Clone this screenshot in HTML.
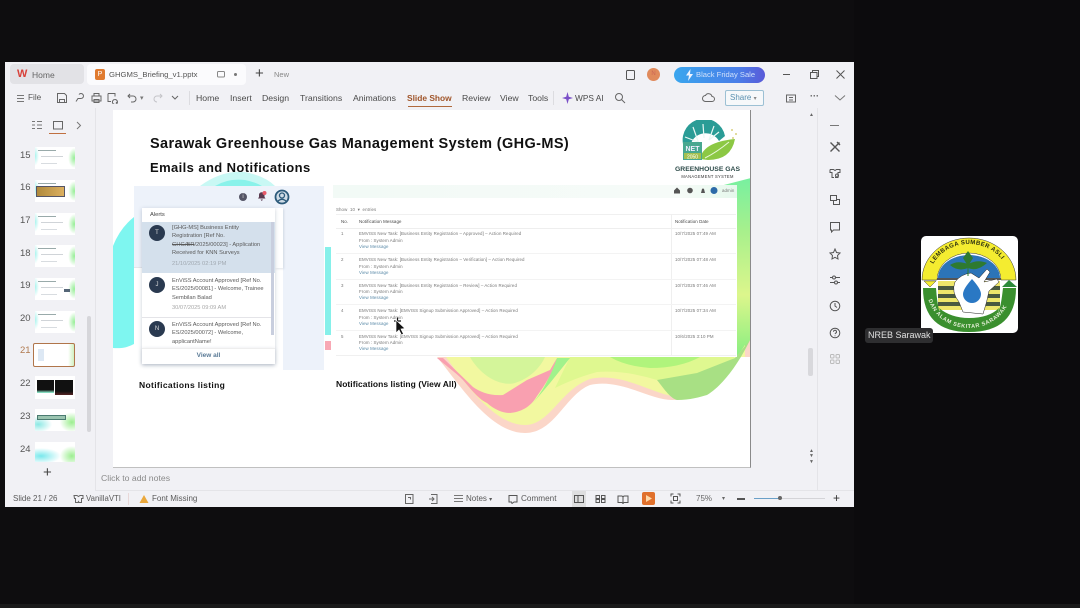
<!DOCTYPE html>
<html><head><meta charset="utf-8"><style>
html,body{margin:0;padding:0;width:1080px;height:608px;overflow:hidden;background:#0e0d0f}
*{box-sizing:border-box}
body{font-family:"Liberation Sans",sans-serif;position:relative}
.a{position:absolute;white-space:nowrap}
.t{position:absolute;white-space:nowrap;color:#444;font-size:9px;line-height:12px}
.m{position:absolute;white-space:nowrap;top:92px;font-size:8.700px;line-height:12px;color:#4a4a4a}
.n{position:absolute;left:20px;font-size:9.500px;color:#555;line-height:12px}
.th{position:absolute;left:35px;width:40px;height:22px;background:linear-gradient(#9aa,#9aa) 3px 3px/18px 1px no-repeat,linear-gradient(#d0d4d8,#d0d4d8) 6px 9px/22px 1px no-repeat,linear-gradient(#d8dce0,#d8dce0) 6px 16px/16px 1px no-repeat,radial-gradient(ellipse 6px 10px at 98% 50%,#98ee98,rgba(255,255,255,0)),radial-gradient(ellipse 4px 10px at 0 40%,#a8f4ee,rgba(255,255,255,0)),#fff}
.s6{color:#777;font-size:4.400px;letter-spacing:.02em;position:absolute;white-space:nowrap;filter:blur(.3px)}
.al{position:absolute;left:172px;font-size:5.700px;line-height:8.400px;color:#5a5a5a;white-space:nowrap;filter:blur(.2px)}
.av{position:absolute;left:149px;width:16px;height:16px;border-radius:50%;background:#2a3a50;color:#ddd;font-size:6px;line-height:16px;text-align:center}
svg.i{position:absolute;fill:none;stroke:#555;stroke-width:1}
</style></head><body>
<div class="a" style="left:854px;top:0;width:226px;height:608px;background:#0c0b0d"></div>
<div class="a" style="left:0;top:604px;width:1080px;height:4px;background:#1a1a1a"></div>
<!-- window -->
<div class="a" style="left:5px;top:62px;width:849px;height:445px;background:#f1f1f5"></div>
<!-- tabs -->
<div class="a" style="left:10px;top:64px;width:74px;height:20px;background:#e2e2e6;border-radius:4px"></div>
<div class="a" style="left:17px;top:68px;color:#d8413a;font-weight:bold;font-size:11px;line-height:12px">W</div>
<div class="t" style="left:32px;top:69px;font-size:8.500px;color:#666">Home</div>
<div class="a" style="left:87px;top:64px;width:159px;height:21px;background:#fbfbfd;border-radius:4px"></div>
<div class="a" style="left:95px;top:69px;width:10px;height:11px;background:#e07b30;border-radius:2px;color:#fff;font-size:7px;line-height:11px;text-align:center">P</div>
<div class="t" style="left:109px;top:69px;font-size:7.700px;color:#555">GHGMS_Briefing_v1.pptx</div>
<svg class="i" style="left:216px;top:70px" width="10" height="10"><rect x="1.500" y="1.500" width="7" height="5.500" rx="1" stroke="#888"/></svg>
<div class="a" style="left:234px;top:73px;width:3px;height:3px;background:#777;border-radius:50%"></div>
<div class="a" style="left:255px;top:66px;font-size:15px;line-height:16px;color:#444">+</div>
<div class="t" style="left:274px;top:69px;font-size:7.500px;color:#888">New</div>
<svg class="i" style="left:625px;top:69px" width="12" height="12"><rect x="1.500" y="1.500" width="8" height="9" rx="1" stroke="#555"/></svg>
<div class="a" style="left:647px;top:68px;width:13px;height:13px;border-radius:50%;background:#e08a5c;color:#c65;font-size:6px;line-height:13px;text-align:center">N</div>
<div class="a" style="left:674px;top:67px;width:91px;height:16px;border-radius:8px;background:linear-gradient(90deg,#3aa6ee,#4a7ee8 70%,#5a5ad8)"></div>
<svg class="i" style="left:685px;top:69px;stroke:none" width="9" height="12"><path d="M5.500 0L1 6.500h3L3 12l5-7H5z" fill="#eef4ff"/></svg>
<div class="t" style="left:696px;top:69px;font-size:7.600px;color:#cfe0fb">Black Friday Sale</div>
<div class="a" style="left:783px;top:74px;width:7px;height:1px;background:#555"></div>
<svg class="i" style="left:809px;top:69px" width="11" height="11"><path d="M1.500 3.500h6.500v6h-6.500zM3.500 3.500v-2h6v6h-2" stroke="#555"/></svg>
<svg class="i" style="left:835px;top:69px" width="11" height="11"><path d="M1.500 1.500l8 8M9.500 1.500l-8 8" stroke="#555"/></svg>
<!-- toolbar -->
<svg class="i" style="left:17px;top:94px" width="8" height="9"><path d="M0 1.500h7M0 4.500h7M0 7.500h7" stroke="#777"/></svg>
<div class="t" style="left:28px;top:92px;font-size:8.200px;color:#555">File</div>
<svg class="i" style="left:56px;top:92px" width="84" height="12"><path d="M1.500 1.500h7l2 2v7h-9zM3.500 10.500v-3h5v3" stroke="#666"/><path d="M23 2.500a2.500 2.500 0 1 1 2 4h-3l-2 3" stroke="#666"/><path d="M36 4h9v5h-9zM38 4v-2.500h5v2.500M38 7.500h5v3h-5z" stroke="#666"/><path d="M52 1.500h7v3M52 1.500v8h3M59 7.500a2.500 2.500 0 1 1-.1 0M61 11l-1-1" stroke="#666"/><path d="M74 2l-2 2 2 2M72 4h5a3 3 0 0 1 0 6h-2" stroke="#666"/></svg>
<div class="t" style="left:140px;top:93px;font-size:7px;color:#777">▾</div>
<svg class="i" style="left:152px;top:92px" width="30" height="12"><path d="M8 2l2 2-2 2M10 4h-5a3 3 0 0 0 0 6" stroke="#c4c4c8"/><path d="M20 4l3 3 3-3" stroke="#666"/></svg>
<div class="a" style="left:189px;top:91px;width:1px;height:14px;background:#dcdce0"></div>
<div class="m" style="left:196px">Home</div>
<div class="m" style="left:230px">Insert</div>
<div class="m" style="left:262px">Design</div>
<div class="m" style="left:300px">Transitions</div>
<div class="m" style="left:353px">Animations</div>
<div class="m" style="left:407px;color:#a0552a;font-weight:bold;font-size:8.400px">Slide Show</div>
<div class="a" style="left:408px;top:106px;width:44px;height:1px;background:#b0693c"></div>
<div class="m" style="left:462px">Review</div>
<div class="m" style="left:500px">View</div>
<div class="m" style="left:528px">Tools</div>
<div class="a" style="left:553px;top:91px;width:1px;height:14px;background:#dcdce0"></div>
<svg class="i" style="left:562px;top:92px;stroke:none" width="11" height="12"><path d="M5.500 0l1.300 4.700 4.200 1.300-4.200 1.300-1.300 4.700-1.300-4.700-4.200-1.300 4.200-1.300z" fill="#7a4fc8"/></svg>
<div class="m" style="left:575px;font-size:8.300px">WPS AI</div>
<svg class="i" style="left:614px;top:92px" width="12" height="12"><circle cx="5" cy="5" r="3.500" stroke="#666"/><path d="M7.500 7.500l3.500 3.500" stroke="#666"/></svg>
<svg class="i" style="left:702px;top:92px" width="13" height="12"><path d="M3.500 9.500a3 3 0 0 1 0-6 3.500 3.500 0 0 1 6.500 1 2.500 2.500 0 0 1 0 5z" stroke="#666"/></svg>
<div class="a" style="left:725px;top:90px;width:39px;height:16px;border:1px solid #9cc0d4;border-radius:2px;background:#f6f8fa;color:#5a90b0;font-size:8px;line-height:14px;padding-left:4px">Share <span style="font-size:6px;color:#888">▾</span></div>
<svg class="i" style="left:785px;top:92px" width="12" height="12"><path d="M1.500 3h9v7h-9zM4 5.500h4M4 8h4" stroke="#666"/></svg>
<div class="t" style="left:810px;top:90px;font-size:9px;color:#555;font-weight:bold">···</div>
<svg class="i" style="left:834px;top:94px" width="12" height="8"><path d="M1 1.500l5 4.500 5-4.500" stroke="#777"/></svg>
<!-- left panel -->
<div class="a" style="left:95px;top:108px;width:1px;height:382px;background:#e4e4e8"></div>
<svg class="i" style="left:31px;top:120px" width="60" height="12"><path d="M1 1.500h3M1 5h3M1 8.500h3M6 1.500h5M6 5h5M6 8.500h5" stroke="#777"/><rect x="22.500" y="1.500" width="9" height="7.500" stroke="#666"/><path d="M46 2l3.500 3.500-3.500 3.500" stroke="#777"/></svg>
<div class="a" style="left:49px;top:133px;width:17px;height:1px;background:#c07040"></div>
<div class="a" style="left:87px;top:316px;width:4px;height:116px;background:#d6d6da;border-radius:2px"></div>
<div class="n" style="top:150px">15</div><div class="th" style="top:147px"></div>
<div class="n" style="top:182px">16</div><div class="th" style="top:180px"></div><div class="a" style="left:36px;top:186px;width:29px;height:11px;background:linear-gradient(90deg,#b08a3c,#dcb060);border:1px solid #556"></div>
<div class="n" style="top:215px">17</div><div class="th" style="top:213px"></div>
<div class="n" style="top:248px">18</div><div class="th" style="top:245px"></div>
<div class="n" style="top:280px">19</div><div class="th" style="top:278px"></div><div class="a" style="left:64px;top:289px;width:6px;height:3px;background:#567"></div>
<div class="n" style="top:313px">20</div><div class="th" style="top:311px"></div>
<div class="n" style="top:345px;color:#b07a50">21</div><div class="a" style="left:33px;top:343px;width:42px;height:24px;background:linear-gradient(90deg,#fff,#fff 85%,#d0f0c0);border:1px solid #b0754a;border-radius:2px"></div>
<div class="a" style="left:38px;top:349px;width:6px;height:12px;background:#dde8f4"></div>
<div class="n" style="top:378px">22</div><div class="a" style="left:35px;top:376px;width:40px;height:23px;background:#fff"></div><div class="a" style="left:37px;top:380px;width:17px;height:13px;background:linear-gradient(#111 75%,#9fd)"></div><div class="a" style="left:55px;top:380px;width:18px;height:15px;background:linear-gradient(#111 75%,#522)"></div>
<div class="n" style="top:411px">23</div><div class="a" style="left:35px;top:409px;width:40px;height:22px;background:radial-gradient(ellipse 12px 10px at 92% 60%,#9cee90,rgba(255,255,255,0)),radial-gradient(ellipse 14px 8px at 8% 70%,#8ce8e4,rgba(255,255,255,0)),#fff"></div><div class="a" style="left:37px;top:415px;width:29px;height:5px;background:#9ac4b0;border:1px solid #4a7a70"></div>
<div class="n" style="top:444px">24</div><div class="a" style="left:35px;top:442px;width:40px;height:20px;background:radial-gradient(ellipse 12px 10px at 92% 70%,#9cee90,rgba(255,255,255,0)),radial-gradient(ellipse 20px 8px at 15% 70%,#78e8ec,rgba(255,255,255,0)),#fff"></div>
<div class="a" style="left:43px;top:465px;font-size:15px;line-height:16px;color:#444">+</div>
<!-- slide -->
<div class="a" style="left:113px;top:110px;width:638px;height:358px;background:#fff;border-right:1.500px solid #8a8a8a;border-bottom:1.500px solid #c0c0c0;overflow:hidden">
<svg style="position:absolute;left:0;top:0" width="638" height="358" viewBox="113 110 638 358">
<defs><linearGradient id="rg" x1="0" y1="0" x2="0" y2="1"><stop offset="0" stop-color="#78f0a0"/><stop offset=".3" stop-color="#a8f08c"/><stop offset=".65" stop-color="#dcf68c"/><stop offset="1" stop-color="#86ee80"/></linearGradient></defs>
<!-- cyan -->
<path d="M113 246Q120 228 134 217L134 344Q125 349 113 348Z" fill="#7ef6f0"/>
<path d="M200 186Q222 170 245 172Q265 176 275 186Z" fill="#c8f8f4"/>
<path d="M215 186Q228 178 245 180Q255 182 262 186Z" fill="#8af2ea"/>
<rect x="325" y="247" width="6" height="88" fill="#86f0ea"/>
<rect x="325" y="341" width="6" height="9" fill="#f8a8b4"/>
<!-- right strip -->
<path d="M720 186L751 178L751 340L735 358L720 358Z" fill="url(#rg)"/>
<!-- wave -->
<path d="M437 357C460 385 490 433 525 433C555 433 565 395 590 385C620 378 650 400 672 400C710 400 735 370 751 338L751 357Z" fill="#fbd6c8"/>
<path d="M446 357C468 388 496 425 525 425C550 425 560 390 590 379C620 372 650 392 672 396C700 396 725 375 745 345L745 357Z" fill="#f2f8a0"/>
<path d="M570 357L735 357Q715 372 697 373Q675 380 657 380Q625 370 597 372Q575 378 555 388Z" fill="#dff890"/>
<path d="M610 357L700 357Q680 368 650 368Q625 366 610 357Z" fill="#b0f47c"/>
<path d="M470 357C480 375 500 387 515 383C530 378 540 368 545 357Z" fill="#d4f59a"/>
<path d="M437 358C445 365 455 372 463 380C473 392 480 400 487 403C495 410 503 413 510 413C520 412 530 408 537 396C545 385 550 376 553 370L557 358L550 370L527 380L503 395C490 396 480 392 473 387L443 358Z" fill="#f9a0b0"/>
<path d="M557 358L570 358L550 383L533 403C542 392 550 378 557 358Z" fill="#a0f28c"/>
<path d="M750 340L735 358L697 373L657 380C665 390 670 398 677 400C690 400 700 397 707 395C722 386 738 365 750 340Z" fill="#a8e084"/>
</svg>
<div class="a" style="left:37px;top:25px;font-size:14.500px;line-height:18px;font-weight:bold;color:#111;letter-spacing:.38px">Sarawak Greenhouse Gas Management System (GHG-MS)</div>
<div class="a" style="left:37px;top:48.500px;font-size:13px;line-height:17px;font-weight:bold;color:#111;letter-spacing:.4px">Emails and Notifications</div>
<div class="a" style="left:26px;top:269px;font-size:8.500px;line-height:12px;font-weight:bold;color:#111;letter-spacing:.35px">Notifications listing</div>
<div class="a" style="left:223px;top:268px;font-size:8.500px;line-height:12px;font-weight:bold;color:#111;letter-spacing:.05px">Notifications listing (View All)</div>
<!-- logo -->
<svg style="position:absolute;left:560px;top:10px" width="70" height="42" viewBox="0 0 70 42">
<path d="M10 24A21 21 0 0 1 52 16L46 21A15 14 0 0 0 18 24Z" fill="#2a9c96"/>
<path d="M20 7l6 17M30 4l1 14M41 6l-5 14M12 17l13 5M46 12l-10 8" stroke="#e8f8f4" stroke-width="1.200" fill="none"/>
<path d="M27 39Q30 22 62 19Q58 40 35 40Z" fill="#8cc844"/>
<path d="M32 38Q44 32 56 22" stroke="#e8f8d8" stroke-width="1" fill="none"/>
<rect x="10" y="22" width="19" height="18" fill="#48a890"/>
<rect x="11" y="33" width="17" height="6" fill="#a4c050"/>
<text x="19.500" y="31" font-family="Liberation Sans" font-size="7" font-weight="bold" fill="#eef" text-anchor="middle">NET</text>
<text x="19.500" y="38.500" font-family="Liberation Sans" font-size="5" fill="#fff" text-anchor="middle">2050</text>
<circle cx="59" cy="10" r="1" fill="#d8d080"/><circle cx="63" cy="14" r="1" fill="#d8d080"/><circle cx="60" cy="18" r="1" fill="#d8d080"/>
</svg>
<div class="a" style="left:560px;top:55px;width:69px;text-align:center;font-size:6.800px;line-height:9px;color:#2c4a48;font-weight:bold">GREENHOUSE GAS</div>
<div class="a" style="left:560px;top:64px;width:69px;text-align:center;font-size:4.100px;line-height:6px;letter-spacing:.3px;color:#333">MANAGEMENT SYSTEM</div>
<!-- notif table panel -->
<div class="a" style="left:220px;top:75px;width:404px;height:172px;background:#fff"></div>
<div class="a" style="left:220px;top:75px;width:404px;height:13px;background:linear-gradient(90deg,#f2faf6,#f6fbf8 85%,#e6f8ec)"></div>
</div>
<!-- alerts panel -->
<div class="a" style="left:134px;top:186px;width:190px;height:81px;background:#edf2fa"></div>
<div class="a" style="left:283px;top:186px;width:41px;height:184px;background:#edf2fa"></div>
<div class="a" style="left:134px;top:267px;width:149px;height:1px;background:#e4e6ea"></div>
<div class="a" style="left:239px;top:193px;width:8px;height:8px;border-radius:50%;background:#556;color:#ddd;font-size:6px;line-height:8px;text-align:center">i</div>
<svg class="i" style="left:256px;top:190px;stroke:none" width="12" height="12"><path d="M2 8.500h7.500l-1-1.500v-2.500a2.800 2.800 0 0 0-5.500 0v2.500zM4.500 9.500h2.500l-1.200 1.500z" fill="#5a3a50"/><circle cx="8.500" cy="3" r="2" fill="#e85a6a"/></svg>
<svg class="i" style="left:274px;top:189px;stroke:none" width="16" height="16"><circle cx="8" cy="8" r="6.500" fill="#cfdce6" stroke="#2c5a7a" stroke-width="1.800"/><circle cx="8" cy="6.500" r="2.500" fill="none" stroke="#2c5a7a" stroke-width="1.300"/><path d="M3.500 12.500Q8 8 12.500 12.500" fill="none" stroke="#2c5a7a" stroke-width="1.300"/></svg>
<div class="a" style="left:275px;top:208px;width:8px;height:60px;background:#fff;box-shadow:1px 1px 2px rgba(60,80,110,.15)"></div>
<div class="a" style="left:142px;top:208px;width:133px;height:156px;background:#fff;box-shadow:0 1px 4px rgba(60,80,110,.28)"></div>
<div class="t" style="left:150px;top:209px;font-size:5.800px;color:#444">Alerts</div>
<div class="a" style="left:142px;top:222px;width:133px;height:51px;background:#d4e0ec"></div>
<div class="a" style="left:271px;top:222px;width:3px;height:113px;background:#c8cede"></div>
<div class="av" style="top:225px">T</div>
<div class="al" style="top:224px">[GHG-MS] Business Entity<br>Registration [Ref No.<br><span style="text-decoration:line-through">GHG/BR</span>/2025/00023] - Application<br>Received for KNN Surveys</div>
<div class="al" style="top:260px;color:#a0a8b0">21/10/2025 02:19 PM</div>
<div class="av" style="top:277px">J</div>
<div class="al" style="top:277px">EnViSS Account Approved [Ref No.<br>ES/2025/00081] - Welcome, Trainee<br>Sembilan Balad</div>
<div class="al" style="top:304px;color:#a8a8a8">30/07/2025 09:09 AM</div>
<div class="a" style="left:142px;top:317px;width:129px;height:1px;background:#e4e4e8"></div>
<div class="av" style="top:321px">N</div>
<div class="al" style="top:321px">EnViSS Account Approved [Ref No.<br>ES/2025/00072] - Welcome,<br>applicantName!</div>
<div class="a" style="left:142px;top:348px;width:133px;height:16px;background:#fff;border-top:1px solid #eee;box-shadow:0 1px 4px rgba(60,80,110,.2)"></div>
<div class="a" style="left:142px;top:351px;width:133px;text-align:center;font-size:6.500px;line-height:10px;color:#5a7a96;font-weight:bold">View all</div>
<!-- table -->
<svg class="i" style="left:672px;top:186px;stroke:none" width="50" height="9"><path d="M2 4.500l3-3 3 3v3h-6z" fill="#555"/><circle cx="18" cy="4.500" r="2.800" fill="#555"/><path d="M29 7l1-4a1.500 1.500 0 0 1 2 0l1 4z" fill="#555"/><circle cx="42" cy="4.500" r="3.500" fill="#2c6aa8"/></svg>
<div class="s6" style="left:722px;top:188px">admin</div>
<div class="s6" style="left:336px;top:207px">Show &nbsp;10 &nbsp;▾ &nbsp;entries</div>
<div class="a" style="left:336px;top:214px;width:400px;height:142px;border-top:1px solid #f0f0f0;border-bottom:1px solid #f0f0f0"></div>
<div class="a" style="left:671px;top:214px;width:1px;height:142px;background:#efefef"></div>
<div class="a" style="left:336px;top:228px;width:400px;height:1px;background:#eee"></div>
<div class="a" style="left:336px;top:253px;width:400px;height:1px;background:#f3f3f3"></div>
<div class="a" style="left:336px;top:279px;width:400px;height:1px;background:#f3f3f3"></div>
<div class="a" style="left:336px;top:304px;width:400px;height:1px;background:#f3f3f3"></div>
<div class="a" style="left:336px;top:330px;width:400px;height:1px;background:#f3f3f3"></div>
<div class="s6" style="left:341px;top:219px;color:#444">No.</div>
<div class="s6" style="left:359px;top:219px;color:#444">Notification Message</div>
<div class="s6" style="left:675px;top:219px;color:#444">Notification Date</div>
<div class="s6" style="left:341px;top:231px">1</div>
<div class="s6" style="left:359px;top:231px">EMVISS New Task: [Business Entity Registration – Approved] – Action Required</div>
<div class="s6" style="left:359px;top:238px">From : System Admin</div>
<div class="s6" style="left:359px;top:244px;color:#5a8aa8">View Message</div>
<div class="s6" style="left:675px;top:231px">10/7/2025 07:49 AM</div>
<div class="s6" style="left:341px;top:257px">2</div>
<div class="s6" style="left:359px;top:257px">EMVISS New Task: [Business Entity Registration – Verification] – Action Required</div>
<div class="s6" style="left:359px;top:264px">From : System Admin</div>
<div class="s6" style="left:359px;top:270px;color:#5a8aa8">View Message</div>
<div class="s6" style="left:675px;top:257px">10/7/2025 07:48 AM</div>
<div class="s6" style="left:341px;top:283px">3</div>
<div class="s6" style="left:359px;top:283px">EMVISS New Task: [Business Entity Registration – Review] – Action Required</div>
<div class="s6" style="left:359px;top:289px">From : System Admin</div>
<div class="s6" style="left:359px;top:295px;color:#5a8aa8">View Message</div>
<div class="s6" style="left:675px;top:283px">10/7/2025 07:46 AM</div>
<div class="s6" style="left:341px;top:308px">4</div>
<div class="s6" style="left:359px;top:308px">EMVISS New Task: [EMVISS Signup Submission Approved] – Action Required</div>
<div class="s6" style="left:359px;top:315px">From : System Admin</div>
<div class="s6" style="left:359px;top:321px;color:#5a8aa8">View Message</div>
<div class="s6" style="left:675px;top:308px">10/7/2025 07:34 AM</div>
<div class="s6" style="left:341px;top:334px">5</div>
<div class="s6" style="left:359px;top:334px">EMVISS New Task: [EMVISS Signup Submission Approved] – Action Required</div>
<div class="s6" style="left:359px;top:340px">From : System Admin</div>
<div class="s6" style="left:359px;top:346px;color:#5a8aa8">View Message</div>
<div class="s6" style="left:675px;top:334px">10/6/2025 3:10 PM</div>
<!-- cursor -->
<svg style="position:absolute;left:391px;top:316px" width="16" height="20"><path d="M3 5h7M6.500 1.500v7" stroke="#111" stroke-width="1.200"/><path d="M5 4l0 13 3-3 2.500 5 2-1-2.500-5 4-.5z" fill="#111" stroke="#fff" stroke-width=".7"/></svg>
<!-- scroll right -->
<div class="a" style="left:808px;top:348px;width:5px;height:28px;background:#d8d8dc;border-radius:2px"></div>
<div class="a" style="left:809px;top:112px;font-size:5px;line-height:6px;color:#666">▲</div>
<div class="a" style="left:809px;top:449px;font-size:5px;line-height:5px;color:#666">▲<br>▼</div>
<div class="a" style="left:809px;top:460px;font-size:5px;line-height:5px;color:#666">▼</div>
<div class="a" style="left:817px;top:108px;width:1px;height:382px;background:#e4e4e8"></div>
<!-- right rail -->
<div class="a" style="left:830px;top:125px;width:9px;height:1px;background:#777"></div>
<svg class="i" style="left:829px;top:141px" width="12" height="12"><path d="M1.500 1.500l9 9M10.500 1.500l-9 9M8 1l3 3" stroke="#555" stroke-width="1.400"/></svg>
<svg class="i" style="left:829px;top:167px" width="12" height="12"><path d="M1 2.500h3.500l1.500 1 1.500-1h3.500v3h-2v5h-3M1 2.500v3h2v5h2" stroke="#555"/><circle cx="8" cy="8.500" r="1.500" stroke="#555"/></svg>
<svg class="i" style="left:829px;top:194px" width="12" height="12"><path d="M1.500 1.500h6v5h-6zM4.500 6.500v4h6v-5h-3" stroke="#555"/></svg>
<svg class="i" style="left:829px;top:221px" width="12" height="12"><path d="M1.500 1.500h9v7.500h-6l-2 2v-2h-1z" stroke="#555"/></svg>
<svg class="i" style="left:829px;top:248px" width="12" height="12"><path d="M6 1l1.500 3.500 3.500.5-2.500 2.500.5 3.500-3-1.700-3 1.700.5-3.500L1 5l3.500-.5z" stroke="#555"/></svg>
<svg class="i" style="left:829px;top:274px" width="12" height="12"><path d="M1 3.500h3M6.500 3.500h4.500M1 8.500h4.500M8.500 8.500h2.500" stroke="#555"/><circle cx="5" cy="3.500" r="1.500" stroke="#555"/><circle cx="7" cy="8.500" r="1.500" stroke="#555"/></svg>
<svg class="i" style="left:829px;top:300px" width="12" height="12"><circle cx="6" cy="6" r="4.800" stroke="#555"/><path d="M6 3v3l2 1.500" stroke="#555"/></svg>
<svg class="i" style="left:829px;top:327px" width="12" height="12"><circle cx="6" cy="6" r="4.800" stroke="#555"/><path d="M4.500 4.800a1.500 1.500 0 1 1 2 1.400l-.5.800M6 8.500v.8" stroke="#555"/></svg>
<svg class="i" style="left:829px;top:353px" width="12" height="12"><rect x="1.500" y="1.500" width="3.500" height="3.500" rx="1" stroke="#bbb"/><rect x="7" y="1.500" width="3.500" height="3.500" rx="1" stroke="#bbb"/><rect x="1.500" y="7" width="3.500" height="3.500" rx="1" stroke="#bbb"/><rect x="7" y="7" width="3.500" height="3.500" rx="1" stroke="#bbb"/></svg>
<!-- notes -->
<div class="t" style="left:101px;top:472px;font-size:8.700px;color:#8a8a8a">Click to add notes</div>
<div class="a" style="left:95px;top:490px;width:759px;height:1px;background:#e4e4e8"></div>
<!-- status -->
<div class="t" style="left:13px;top:493px;font-size:8px;color:#5a5a5a">Slide 21 / 26</div>
<svg class="i" style="left:73px;top:494px" width="11" height="10"><path d="M1 1.500h3l1.500 1 1.500-1h3v3h-1.500v4h-2.500l-.5-1-.5 1h-2.500v-4h-1z" stroke="#666"/></svg>
<div class="t" style="left:86px;top:493px;font-size:7.800px;color:#5a5a5a">VanillaVTI</div>
<div class="a" style="left:128px;top:493px;width:1px;height:12px;background:#e8d8d8"></div>
<svg class="i" style="left:139px;top:494px;stroke:none" width="10" height="10"><path d="M5 1l4.500 8h-9z" fill="#eaa83c"/></svg>
<div class="t" style="left:152px;top:493px;font-size:8px;color:#5a5a5a">Font Missing</div>
<svg class="i" style="left:404px;top:493px" width="34" height="12"><rect x="1.500" y="1.500" width="7.500" height="9" stroke="#666"/><path d="M4 4.500h2.500v2" stroke="#666"/><path d="M27 1.500h6v9h-6M25 6h5M28 4l2 2-2 2" stroke="#666"/></svg>
<svg class="i" style="left:454px;top:494px" width="10" height="10"><path d="M0 1.500h9M0 4.500h9M0 7.500h9" stroke="#777"/></svg>
<div class="t" style="left:466px;top:493px;font-size:8px;color:#5a5a5a">Notes <span style="font-size:6px">▾</span></div>
<svg class="i" style="left:508px;top:494px" width="10" height="10"><path d="M1 8V1.500h8V8H6L4 9.500 3.500 8z" stroke="#555"/></svg>
<div class="t" style="left:521px;top:493px;font-size:8.200px;color:#5a5a5a">Comment</div>
<div class="a" style="left:572px;top:491px;width:14px;height:16px;background:#dededf"></div>
<svg class="i" style="left:573px;top:494px" width="62" height="10"><path d="M1.500 1.500h9v7h-9zM5 1.500v7" stroke="#555"/><path d="M23 1.500h3.500v3h-3.500zM28.500 1.500h3.500v3h-3.500zM23 5.500h3.500v3h-3.500zM28.500 5.500h3.500v3h-3.500z" stroke="#555"/><path d="M45 2h4l1 1 1-1h4v6.500h-4l-1 1-1-1h-4zM50 3v6" stroke="#555"/></svg>
<div class="a" style="left:642px;top:492px;width:13px;height:13px;background:#e0702c;border-radius:2px"></div>
<svg class="i" style="left:645px;top:495px;stroke:none" width="7" height="7"><path d="M1 0l6 3.500-6 3.500z" fill="#ffd9a8"/></svg>
<svg class="i" style="left:670px;top:493px" width="11" height="11"><path d="M1 3.500v-2.500h2.500M7.500 1h2.500v2.500M10 7.500v2.500h-2.500M3.500 10h-2.500v-2.500" stroke="#555"/><rect x="3.500" y="3.500" width="4" height="4" stroke="#555"/></svg>
<div class="t" style="left:696px;top:493px;font-size:8px;color:#666">75%</div>
<div class="t" style="left:722px;top:493px;font-size:6px;color:#666">▾</div>
<div class="a" style="left:737px;top:498px;width:8px;height:1.500px;background:#555"></div>
<div class="a" style="left:754px;top:498px;width:71px;height:1px;background:#d4d4d8"></div>
<div class="a" style="left:754px;top:498px;width:25px;height:1px;background:#6aa0c8"></div>
<div class="a" style="left:778px;top:496px;width:4px;height:4px;background:#666;border-radius:50%"></div>
<div class="a" style="left:833px;top:491px;font-size:12px;line-height:14px;color:#333">+</div>
<!-- participant tile -->
<div class="a" style="left:921px;top:236px;width:97px;height:97px;background:#fff;border-radius:5px;overflow:hidden">
<svg width="97" height="97" viewBox="0 0 97 97" style="position:absolute;left:0;top:0">
<path d="M1 44A47 42 0 0 1 95 44L80 44A32 27 0 0 0 16 44Z" fill="#f4ec30" stroke="#333" stroke-width=".5"/>
<path d="M17 42A31 23 0 0 1 79 42Z" fill="#2c74b8"/>
<rect x="16" y="42" width="64" height="2" fill="#555"/>
<path d="M3 45h12l-6 6z" fill="#f4ec30" stroke="#444" stroke-width=".5"/>
<path d="M81 51l7-7 8 7z" fill="#2c8a3a"/>
<rect x="17" y="45" width="62" height="5" fill="#eee66a"/>
<rect x="17" y="50" width="62" height="4" fill="#4a5a40"/>
<rect x="17" y="54" width="62" height="4" fill="#eee66a"/>
<rect x="17" y="58" width="62" height="4" fill="#4a5a40"/>
<rect x="17" y="62" width="62" height="4" fill="#eee66a"/>
<rect x="17" y="66" width="62" height="4" fill="#4a5a40"/>
<rect x="17" y="70" width="62" height="4" fill="#eee66a"/>
<path d="M2 52Q2 96 48 96Q95 96 95 52L82 52Q80 70 78 74L70 82H28L18 74Q16 66 15 52Z" fill="#3a8f2e"/>
<path d="M18 72Q30 82 48 82Q68 82 78 72L74 86H24Z" fill="#3a8f2e"/>
<path d="M34 46Q40 38 50 37L58 42L66 33L69 36L63 46L76 43L78 46L68 55Q66 66 62 78L42 76L38 66Q30 56 34 46Z" fill="#fff" stroke="#222" stroke-width=".5"/>
<path d="M51 43Q42 53 42 58a9 9 0 0 0 18 0Q60 53 51 43Z" fill="#2a78c4"/>
<path d="M47 40V20" stroke="#2e7a30" stroke-width="1"/>
<path d="M47 28Q36 24 29 29Q37 36 47 32Q56 36 66 27Q57 23 47 28Z" fill="#2e7a30"/>
<path d="M42 22L47 15L52 22L47 30Z" fill="#2e7a30"/>
<defs><path id="t1" d="M8 44A40 36 0 0 1 88 44"/><path id="t2" d="M6 54A42 38 0 0 0 90 54"/></defs>
<text font-family="Liberation Sans" font-size="6" font-weight="bold" fill="#2c3010" letter-spacing=".4"><textPath href="#t1" startOffset="14%">LEMBAGA SUMBER ASLI</textPath></text>
<text font-family="Liberation Sans" font-size="5.500" font-weight="bold" fill="#e6efd8" letter-spacing=".6"><textPath href="#t2" startOffset="8%">DAN ALAM SEKITAR SARAWAK</textPath></text>
</svg>
</div>
<div class="a" style="left:865px;top:328px;width:68px;height:15px;background:#2e2e30;border-radius:3px;color:#e0e0e0;font-size:9px;line-height:15px;padding-left:3px">NREB Sarawak</div>
</body></html>
